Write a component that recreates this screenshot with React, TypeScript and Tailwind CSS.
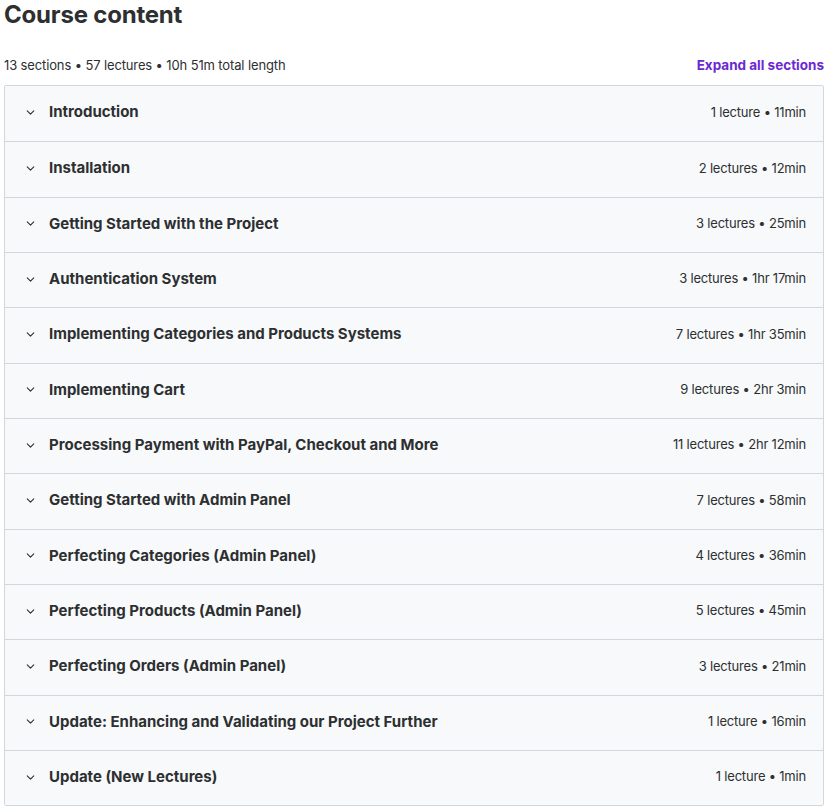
import React from 'react';

interface Section {
  title: string;
  meta: string;
}

const sections: Section[] = [
  { title: 'Introduction', meta: '1 lecture • 11min' },
  { title: 'Installation', meta: '2 lectures • 12min' },
  { title: 'Getting Started with the Project', meta: '3 lectures • 25min' },
  { title: 'Authentication System', meta: '3 lectures • 1hr 17min' },
  { title: 'Implementing Categories and Products Systems', meta: '7 lectures • 1hr 35min' },
  { title: 'Implementing Cart', meta: '9 lectures • 2hr 3min' },
  { title: 'Processing Payment with PayPal, Checkout and More', meta: '11 lectures • 2hr 12min' },
  { title: 'Getting Started with Admin Panel', meta: '7 lectures • 58min' },
  { title: 'Perfecting Categories (Admin Panel)', meta: '4 lectures • 36min' },
  { title: 'Perfecting Products (Admin Panel)', meta: '5 lectures • 45min' },
  { title: 'Perfecting Orders (Admin Panel)', meta: '3 lectures • 21min' },
  { title: 'Update: Enhancing and Validating our Project Further', meta: '1 lecture • 16min' },
  { title: 'Update (New Lectures)', meta: '1 lecture • 1min' },
];

const Chevron: React.FC = () => (
  <svg className="w-[13px] h-[13px] text-[#2d2f31]" viewBox="0 0 24 24" fill="none" stroke="currentColor" strokeWidth="2" strokeLinecap="round" strokeLinejoin="round">
    <path d="M6 9l6 6 6-6" />
  </svg>
);

const SectionRow: React.FC<{ section: Section; first: boolean }> = ({ section, first }) => (
  <div className={`flex items-center h-[55.33px] bg-[#f7f9fa] pl-[19px] pr-[17px] pb-[2px] ${first ? '' : 'border-t border-[#d1d7dc]'}`}>
    <Chevron />
    <span className="ml-[12px] font-bold text-[15px] text-[#2d2f31]">{section.title}</span>
    <span className="ml-auto text-[13px] tracking-[-0.2px] text-[#2d2f31]">{section.meta}</span>
  </div>
);

export default function App() {
  return (
    <div className="w-[831px] pl-[4px] pr-[7px] font-['Inter','Liberation_Sans',sans-serif] text-[#2d2f31]">
      <h2 className="text-[24px] font-bold leading-[30px] tracking-[-0.2px]">Course content</h2>

      <div className="flex items-end justify-between mt-[26px] mb-[11px]">
        <span className="text-[13px] tracking-[-0.13px] leading-[18px]">13 sections • 57 lectures • 10h 51m total length</span>
        <button className="text-[13.5px] font-bold text-[#6d28d2] leading-[18px]">Expand all sections</button>
      </div>

      <div className="border border-[#d1d7dc] rounded-[2px] overflow-hidden">
        {sections.map((s, i) => (
          <SectionRow key={s.title} section={s} first={i === 0} />
        ))}
      </div>
    </div>
  );
}
